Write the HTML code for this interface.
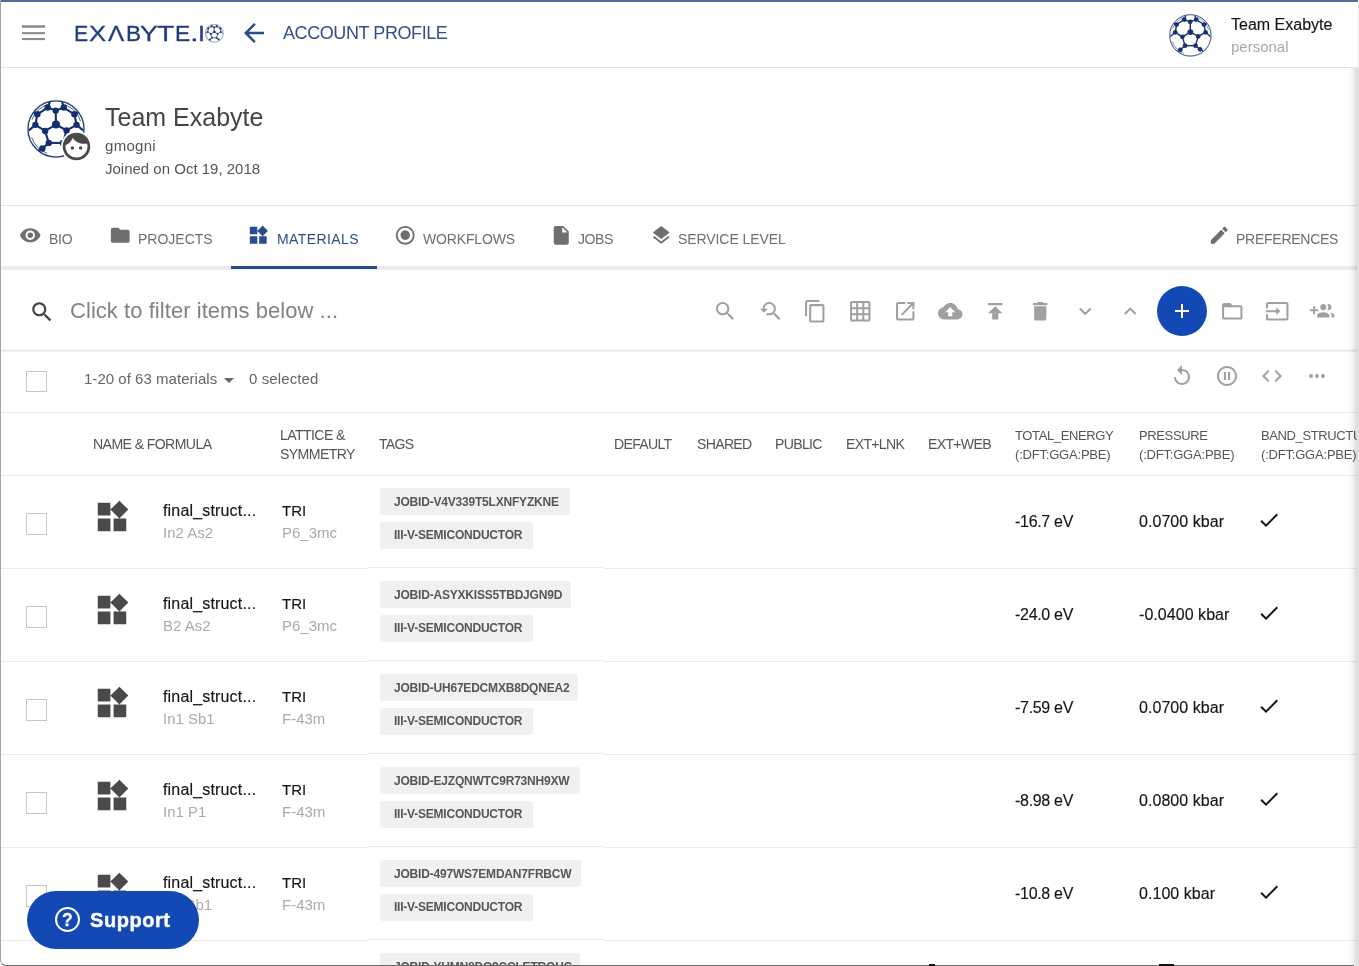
<!DOCTYPE html>
<html><head><meta charset="utf-8"><title>Account Profile</title>
<style>
html,body{margin:0;padding:0;background:#fff;}
body{width:1359px;height:966px;position:relative;overflow:hidden;font-family:"Liberation Sans",sans-serif;}
.t{position:absolute;white-space:nowrap;will-change:transform;}
.ic{position:absolute;display:block;overflow:visible;}
.bar{position:absolute;}
.cb{position:absolute;width:19px;height:20px;border:1px solid #c6c6c6;background:#fff;}
.chip{position:absolute;height:27px;line-height:27.5px;padding:0 0 0 14px;background:#f0f0f0;border-radius:3px;font-size:12px;letter-spacing:-0.2px;font-weight:700;color:#565656;white-space:nowrap;will-change:transform;}
</style></head><body>
<div class="bar" style="left:0;top:0;width:1358px;height:2px;background:linear-gradient(#57719c,#4a6592)"></div>
<svg class="ic" style="left:0;top:0;width:60px;height:60px" viewBox="0 0 60 60"><g fill="#8c8c8c"><rect x="22" y="25.2" width="23" height="2.6"/><rect x="22" y="32.1" width="23" height="2.1"/><rect x="22" y="38" width="23" height="2.1"/></g></svg>
<div class="t" style="left:74.4px;top:22.08px;font-size:22.7px;line-height:22.7px;color:#1f3d7d;font-weight:400;letter-spacing:0px;transform:scaleX(0.938);transform-origin:0 0;-webkit-text-stroke:0.3px #1f3d7d;">E</div>
<div class="t" style="left:88.76px;top:22.08px;font-size:22.7px;line-height:22.7px;color:#1f3d7d;font-weight:400;letter-spacing:0px;transform:scaleX(1.130);transform-origin:0 0;-webkit-text-stroke:0.3px #1f3d7d;">X</div>
<div class="t" style="left:107.58px;top:22.08px;font-size:22.7px;line-height:22.7px;color:#1f3d7d;font-weight:400;letter-spacing:0px;transform:scaleX(1.069);transform-origin:0 0;-webkit-text-stroke:0.3px #1f3d7d;">&#923;</div>
<div class="t" style="left:125.94px;top:22.08px;font-size:22.7px;line-height:22.7px;color:#1f3d7d;font-weight:400;letter-spacing:0px;transform:scaleX(0.972);transform-origin:0 0;-webkit-text-stroke:0.3px #1f3d7d;">B</div>
<div class="t" style="left:139.93px;top:22.08px;font-size:22.7px;line-height:22.7px;color:#1f3d7d;font-weight:400;letter-spacing:0px;transform:scaleX(1.172);transform-origin:0 0;-webkit-text-stroke:0.3px #1f3d7d;">Y</div>
<div class="t" style="left:157.0px;top:22.08px;font-size:22.7px;line-height:22.7px;color:#1f3d7d;font-weight:400;letter-spacing:0px;transform:scaleX(1.240);transform-origin:0 0;-webkit-text-stroke:0.3px #1f3d7d;">T</div>
<div class="t" style="left:174.68px;top:22.08px;font-size:22.7px;line-height:22.7px;color:#1f3d7d;font-weight:400;letter-spacing:0px;transform:scaleX(1.002);transform-origin:0 0;-webkit-text-stroke:0.3px #1f3d7d;">E</div>
<div class="t" style="left:189.56px;top:22.08px;font-size:22.7px;line-height:22.7px;color:#1f3d7d;font-weight:400;letter-spacing:0px;transform:scaleX(1.391);transform-origin:0 0;-webkit-text-stroke:0.3px #1f3d7d;">.</div>
<div class="t" style="left:197.53px;top:22.08px;font-size:22.7px;line-height:22.7px;color:#1f3d7d;font-weight:400;letter-spacing:0px;transform:scaleX(1.113);transform-origin:0 0;-webkit-text-stroke:0.3px #1f3d7d;">I</div>
<svg class="ic" style="left:205.2px;top:23.999999999999996px;width:18.6px;height:18.6px" viewBox="0 0 100 100"><circle cx="50" cy="50" r="49" fill="#fff"/><g stroke="#1f3d7d" stroke-width="3.8" fill="none"><line x1="49.5" y1="18.3" x2="35.6" y2="13.0"/><line x1="49.5" y1="18.3" x2="63.4" y2="13.0"/><line x1="49.5" y1="18.3" x2="50.0" y2="42.3"/><line x1="35.6" y1="13.0" x2="17.8" y2="24.6"/><line x1="63.4" y1="13.0" x2="81.7" y2="24.6"/><line x1="17.8" y1="24.6" x2="14.5" y2="42.8"/><line x1="81.7" y1="24.6" x2="85.5" y2="42.8"/><line x1="14.5" y1="42.8" x2="31.3" y2="53.4"/><line x1="85.5" y1="42.8" x2="68.2" y2="52.4"/><line x1="50.0" y1="42.3" x2="31.3" y2="53.4"/><line x1="50.0" y1="42.3" x2="68.2" y2="52.4"/><line x1="31.3" y1="53.4" x2="37.5" y2="74.0"/><line x1="68.2" y1="52.4" x2="62.0" y2="74.0"/><line x1="37.5" y1="74.0" x2="62.0" y2="74.0"/><line x1="37.5" y1="74.0" x2="26.5" y2="83.6"/><line x1="62.0" y1="74.0" x2="72.6" y2="82.6"/><line x1="35.6" y1="13.0" x2="39.4" y2="3.4"/><line x1="63.4" y1="13.0" x2="60.6" y2="3.4"/><line x1="17.8" y1="24.6" x2="11.6" y2="22.2"/><line x1="81.7" y1="24.6" x2="88.4" y2="22.2"/><line x1="14.5" y1="42.8" x2="3.4" y2="52.4"/><line x1="85.5" y1="42.8" x2="96.6" y2="52.4"/><line x1="26.5" y1="83.6" x2="20.2" y2="87.0"/><line x1="72.6" y1="82.6" x2="79.8" y2="87.0"/></g><g fill="#1f3d7d"><circle cx="35.6" cy="13.0" r="5.8"/><circle cx="63.4" cy="13.0" r="5.8"/><circle cx="49.5" cy="18.3" r="5.8"/><circle cx="17.8" cy="24.6" r="5.8"/><circle cx="81.7" cy="24.6" r="5.8"/><circle cx="50.0" cy="42.3" r="7.2"/><circle cx="14.5" cy="42.8" r="5.8"/><circle cx="85.5" cy="42.8" r="5.8"/><circle cx="31.3" cy="53.4" r="5.8"/><circle cx="68.2" cy="52.4" r="5.8"/><circle cx="37.5" cy="74.0" r="5.8"/><circle cx="62.0" cy="74.0" r="5.8"/><circle cx="26.5" cy="83.6" r="5.8"/><circle cx="72.6" cy="82.6" r="5.8"/></g><circle cx="50" cy="50" r="48.3" fill="none" stroke="#1f3d7d" stroke-width="2.3"/><circle cx="50" cy="50" r="44.5" fill="none" stroke="#1f3d7d" stroke-opacity="0.8" stroke-width="1.7" stroke-dasharray="0 85.5 38.8 31 38.8 31 38.8 15.6"/><circle cx="50" cy="50" r="49.5" fill="none" stroke="#999" stroke-opacity="0.5" stroke-width="1"/></svg>
<svg class="ic" style="left:239px;top:17.5px;width:30px;height:30px;" viewBox="0 0 24 24"><path fill="#2b4c8c" d="M20 11H7.83l5.59-5.59L12 4l-8 8 8 8 1.41-1.41L7.83 13H20v-2z"/></svg>
<div class="t" style="left:283px;top:23.56px;font-size:18px;line-height:18px;color:#30508c;font-weight:400;letter-spacing:-0.42px;">ACCOUNT PROFILE</div>
<svg class="ic" style="left:1168.6px;top:13.600000000000001px;width:42.8px;height:42.8px" viewBox="0 0 100 100"><circle cx="50" cy="50" r="49" fill="#fff"/><g stroke="#143271" stroke-width="3.3" fill="none"><line x1="49.5" y1="18.3" x2="35.6" y2="13.0"/><line x1="49.5" y1="18.3" x2="63.4" y2="13.0"/><line x1="49.5" y1="18.3" x2="50.0" y2="42.3"/><line x1="35.6" y1="13.0" x2="17.8" y2="24.6"/><line x1="63.4" y1="13.0" x2="81.7" y2="24.6"/><line x1="17.8" y1="24.6" x2="14.5" y2="42.8"/><line x1="81.7" y1="24.6" x2="85.5" y2="42.8"/><line x1="14.5" y1="42.8" x2="31.3" y2="53.4"/><line x1="85.5" y1="42.8" x2="68.2" y2="52.4"/><line x1="50.0" y1="42.3" x2="31.3" y2="53.4"/><line x1="50.0" y1="42.3" x2="68.2" y2="52.4"/><line x1="31.3" y1="53.4" x2="37.5" y2="74.0"/><line x1="68.2" y1="52.4" x2="62.0" y2="74.0"/><line x1="37.5" y1="74.0" x2="62.0" y2="74.0"/><line x1="37.5" y1="74.0" x2="26.5" y2="83.6"/><line x1="62.0" y1="74.0" x2="72.6" y2="82.6"/><line x1="35.6" y1="13.0" x2="39.4" y2="3.4"/><line x1="63.4" y1="13.0" x2="60.6" y2="3.4"/><line x1="17.8" y1="24.6" x2="11.6" y2="22.2"/><line x1="81.7" y1="24.6" x2="88.4" y2="22.2"/><line x1="14.5" y1="42.8" x2="3.4" y2="52.4"/><line x1="85.5" y1="42.8" x2="96.6" y2="52.4"/><line x1="26.5" y1="83.6" x2="20.2" y2="87.0"/><line x1="72.6" y1="82.6" x2="79.8" y2="87.0"/></g><g fill="#143271"><circle cx="35.6" cy="13.0" r="5.5"/><circle cx="63.4" cy="13.0" r="5.5"/><circle cx="49.5" cy="18.3" r="5.5"/><circle cx="17.8" cy="24.6" r="5.5"/><circle cx="81.7" cy="24.6" r="5.5"/><circle cx="50.0" cy="42.3" r="6.9"/><circle cx="14.5" cy="42.8" r="5.5"/><circle cx="85.5" cy="42.8" r="5.5"/><circle cx="31.3" cy="53.4" r="5.5"/><circle cx="68.2" cy="52.4" r="5.5"/><circle cx="37.5" cy="74.0" r="5.5"/><circle cx="62.0" cy="74.0" r="5.5"/><circle cx="26.5" cy="83.6" r="5.5"/><circle cx="72.6" cy="82.6" r="5.5"/></g><circle cx="50" cy="50" r="48.3" fill="none" stroke="#143271" stroke-width="2.0"/><circle cx="50" cy="50" r="44.5" fill="none" stroke="#143271" stroke-opacity="0.8" stroke-width="1.5" stroke-dasharray="0 85.5 38.8 31 38.8 31 38.8 15.6"/><circle cx="50" cy="50" r="49.5" fill="none" stroke="#999" stroke-opacity="0.5" stroke-width="1"/></svg>
<div class="t" style="left:1231px;top:17.36px;font-size:16px;line-height:16px;color:#151515;font-weight:400;letter-spacing:0px;-webkit-text-stroke:0.15px #151515;">Team Exabyte</div>
<div class="t" style="left:1231px;top:38.90px;font-size:15px;line-height:15px;color:#a8a8a8;font-weight:400;letter-spacing:0px;">personal</div>
<div class="bar" style="left:0;top:67px;width:1359px;height:1px;background:#dfe3ec"></div>
<svg class="ic" style="left:27px;top:99.5px;width:58px;height:58px" viewBox="0 0 100 100"><circle cx="50" cy="50" r="49" fill="#fff"/><g stroke="#112f6e" stroke-width="3.6" fill="none"><line x1="49.5" y1="18.3" x2="35.6" y2="13.0"/><line x1="49.5" y1="18.3" x2="63.4" y2="13.0"/><line x1="49.5" y1="18.3" x2="50.0" y2="42.3"/><line x1="35.6" y1="13.0" x2="17.8" y2="24.6"/><line x1="63.4" y1="13.0" x2="81.7" y2="24.6"/><line x1="17.8" y1="24.6" x2="14.5" y2="42.8"/><line x1="81.7" y1="24.6" x2="85.5" y2="42.8"/><line x1="14.5" y1="42.8" x2="31.3" y2="53.4"/><line x1="85.5" y1="42.8" x2="68.2" y2="52.4"/><line x1="50.0" y1="42.3" x2="31.3" y2="53.4"/><line x1="50.0" y1="42.3" x2="68.2" y2="52.4"/><line x1="31.3" y1="53.4" x2="37.5" y2="74.0"/><line x1="68.2" y1="52.4" x2="62.0" y2="74.0"/><line x1="37.5" y1="74.0" x2="62.0" y2="74.0"/><line x1="37.5" y1="74.0" x2="26.5" y2="83.6"/><line x1="62.0" y1="74.0" x2="72.6" y2="82.6"/><line x1="35.6" y1="13.0" x2="39.4" y2="3.4"/><line x1="63.4" y1="13.0" x2="60.6" y2="3.4"/><line x1="17.8" y1="24.6" x2="11.6" y2="22.2"/><line x1="81.7" y1="24.6" x2="88.4" y2="22.2"/><line x1="14.5" y1="42.8" x2="3.4" y2="52.4"/><line x1="85.5" y1="42.8" x2="96.6" y2="52.4"/><line x1="26.5" y1="83.6" x2="20.2" y2="87.0"/><line x1="72.6" y1="82.6" x2="79.8" y2="87.0"/></g><g fill="#112f6e"><circle cx="35.6" cy="13.0" r="5.5"/><circle cx="63.4" cy="13.0" r="5.5"/><circle cx="49.5" cy="18.3" r="5.5"/><circle cx="17.8" cy="24.6" r="5.5"/><circle cx="81.7" cy="24.6" r="5.5"/><circle cx="50.0" cy="42.3" r="6.9"/><circle cx="14.5" cy="42.8" r="5.5"/><circle cx="85.5" cy="42.8" r="5.5"/><circle cx="31.3" cy="53.4" r="5.5"/><circle cx="68.2" cy="52.4" r="5.5"/><circle cx="37.5" cy="74.0" r="5.5"/><circle cx="62.0" cy="74.0" r="5.5"/><circle cx="26.5" cy="83.6" r="5.5"/><circle cx="72.6" cy="82.6" r="5.5"/></g><circle cx="50" cy="50" r="48.3" fill="none" stroke="#112f6e" stroke-width="2.2"/><circle cx="50" cy="50" r="44.5" fill="none" stroke="#112f6e" stroke-opacity="0.8" stroke-width="1.6" stroke-dasharray="0 85.5 38.8 31 38.8 31 38.8 15.6"/><circle cx="50" cy="50" r="49.5" fill="none" stroke="#999" stroke-opacity="0.5" stroke-width="1"/></svg>
<div class="bar" style="left:61px;top:131px;width:31px;height:31px;border-radius:50%;background:#fff"></div>
<svg class="ic" style="left:60px;top:130px;width:33px;height:33px;" viewBox="0 0 24 24"><path fill="#4a4a4a" d="M9 11.75c-.69 0-1.25.56-1.25 1.25s.56 1.25 1.25 1.25 1.25-.56 1.25-1.25-.56-1.25-1.25-1.25zm6 0c-.69 0-1.25.56-1.25 1.25s.56 1.25 1.25 1.25 1.25-.56 1.25-1.25-.56-1.25-1.25-1.25zM12 2C6.48 2 2 6.48 2 12s4.48 10 10 10 10-4.48 10-10S17.52 2 12 2zm0 18c-4.41 0-8-3.59-8-8 0-.29.02-.58.05-.86 2.36-1.05 4.23-2.98 5.21-5.37C11.07 8.33 14.05 10 17.420 10c.78 0 1.53-.09 2.25-.26.21.71.33 1.47.33 2.26 0 4.41-3.59 8-8 8z"/></svg>
<div class="t" style="left:105px;top:104.94px;font-size:25px;line-height:25px;color:#454545;font-weight:400;letter-spacing:0px;">Team Exabyte</div>
<div class="t" style="left:105px;top:137.50px;font-size:15px;line-height:15px;color:#555;font-weight:400;letter-spacing:0.3px;">gmogni</div>
<div class="t" style="left:105px;top:161.10px;font-size:15px;line-height:15px;color:#555;font-weight:400;letter-spacing:0px;">Joined on Oct 19, 2018</div>
<div class="bar" style="left:0;top:205px;width:1359px;height:1px;background:#dfe3ec"></div>
<svg class="ic" style="left:19px;top:224px;width:22.5px;height:22.5px;" viewBox="0 0 24 24"><path fill="#6e6e6e" d="M12 4.5C7 4.5 2.73 7.61 1 12c1.73 4.39 6 7.5 11 7.5s9.27-3.11 11-7.5c-1.73-4.39-6-7.5-11-7.5zM12 17c-2.76 0-5-2.24-5-5s2.24-5 5-5 5 2.24 5 5-2.24 5-5 5zm0-8c-1.66 0-3 1.34-3 3s1.34 3 3 3 3-1.34 3-3-1.34-3-3-3z"/></svg>
<div class="t" style="left:49px;top:231.95px;font-size:14px;line-height:14px;color:#6e6e6e;font-weight:400;letter-spacing:-0.3px;">BIO</div>
<svg class="ic" style="left:109px;top:224px;width:22.5px;height:22.5px;" viewBox="0 0 24 24"><path fill="#6e6e6e" d="M10 4H4c-1.1 0-1.99.9-1.99 2L2 18c0 1.1.9 2 2 2h16c1.1 0 2-.9 2-2V8c0-1.1-.9-2-2-2h-8l-2-2z"/></svg>
<div class="t" style="left:138px;top:231.95px;font-size:14px;line-height:14px;color:#6e6e6e;font-weight:400;letter-spacing:0px;">PROJECTS</div>
<svg class="ic" style="left:247px;top:224px;width:22.5px;height:22.5px;" viewBox="0 0 24 24"><path fill="#2b4c8c" d="M13 13v8h8v-8h-8zM3 21h8v-8H3v8zM3 3v8h8V3H3zm13.66-1.310L11 7.34 16.66 13l5.66-5.66-5.66-5.65z"/></svg>
<div class="t" style="left:276.5px;top:231.95px;font-size:14px;line-height:14px;color:#2b4c8c;font-weight:400;letter-spacing:0.4px;">MATERIALS</div>
<svg class="ic" style="left:394px;top:224px;width:22.5px;height:22.5px;" viewBox="0 0 24 24"><path fill="#6e6e6e" d="M12 7c-2.76 0-5 2.24-5 5s2.24 5 5 5 5-2.240 5-5-2.24-5-5-5zm0-5C6.48 2 2 6.48 2 12s4.48 10 10 10 10-4.48 10-10S17.52 2 12 2zm0 18c-4.42 0-8-3.58-8-8s3.58-8 8-8 8 3.58 8 8-3.58 8-8 8z"/></svg>
<div class="t" style="left:423.4px;top:231.95px;font-size:14px;line-height:14px;color:#6e6e6e;font-weight:400;letter-spacing:-0.15px;">WORKFLOWS</div>
<svg class="ic" style="left:550px;top:224px;width:22.5px;height:22.5px;" viewBox="0 0 24 24"><path fill="#6e6e6e" d="M6 2c-1.1 0-1.99.9-1.99 2L4 20c0 1.1.89 2 1.99 2H18c1.1 0 2-.9 2-2V8l-6-6H6zm7 7V3.5L18.5 9H13z"/></svg>
<div class="t" style="left:578.4px;top:231.95px;font-size:14px;line-height:14px;color:#6e6e6e;font-weight:400;letter-spacing:-0.4px;">JOBS</div>
<svg class="ic" style="left:650px;top:224px;width:22.5px;height:22.5px;" viewBox="0 0 24 24"><path fill="#6e6e6e" d="M11.99 18.54l-7.37-5.73L3 14.07l9 7 9-7-1.63-1.27-7.38 5.74zM12 16l7.36-5.73L21 9l-9-7-9 7 1.63 1.27L12 16z"/></svg>
<div class="t" style="left:677.9px;top:231.95px;font-size:14px;line-height:14px;color:#6e6e6e;font-weight:400;letter-spacing:-0.08px;">SERVICE LEVEL</div>
<svg class="ic" style="left:1208px;top:224px;width:22.5px;height:22.5px;" viewBox="0 0 24 24"><path fill="#6e6e6e" d="M3 17.25V21h3.75L17.81 9.94l-3.75-3.75L3 17.25zM20.71 7.04c.39-.39.39-1.02 0-1.41l-2.34-2.34c-.39-.39-1.02-.39-1.41 0l-1.83 1.83 3.75 3.75 1.83-1.83z"/></svg>
<div class="t" style="left:1236.4px;top:231.95px;font-size:14px;line-height:14px;color:#6e6e6e;font-weight:400;letter-spacing:-0.26px;">PREFERENCES</div>
<div class="bar" style="left:0;top:266px;width:1359px;height:4px;background:linear-gradient(#ececec,#e9e9e9 75%,#f6f6f6)"></div>
<div class="bar" style="left:231px;top:266px;width:146px;height:3px;background:#2b4c8c"></div>
<svg class="ic" style="left:28.5px;top:299px;width:26px;height:26px;" viewBox="0 0 24 24"><path fill="#444" d="M15.5 14h-.79l-.28-.27C15.41 12.59 16 11.11 16 9.5 16 5.91 13.09 3 9.5 3S3 5.91 3 9.5 5.91 16 9.5 16c1.61 0 3.09-.59 4.23-1.57l.27.28v.79l5 4.99L20.49 19l-4.99-5zm-6 0C7.01 14 5 11.99 5 9.5S7.01 5 9.5 5 14 7.01 14 9.5 11.99 14 9.5 14z"/></svg>
<div class="t" style="left:69.6px;top:299.63px;font-size:22px;line-height:22px;color:#828282;font-weight:400;letter-spacing:0.05px;">Click to filter items below ...</div>
<svg class="ic" style="left:712.8px;top:298.5px;width:24.5px;height:24.5px;" viewBox="0 0 24 24"><path fill="#a0a0a0" d="M15.5 14h-.79l-.28-.27C15.41 12.59 16 11.11 16 9.5 16 5.91 13.09 3 9.5 3S3 5.91 3 9.5 5.91 16 9.5 16c1.61 0 3.09-.59 4.23-1.57l.27.28v.79l5 4.99L20.49 19l-4.99-5zm-6 0C7.01 14 5 11.99 5 9.5S7.01 5 9.5 5 14 7.01 14 9.5 11.99 14 9.5 14z"/></svg>
<svg class="ic" style="left:757.8px;top:298.5px;width:24.5px;height:24.5px;" viewBox="0 0 24 24"><path fill="#a0a0a0" d="M17.01 14h-.8l-.27-.27c.98-1.14 1.57-2.610 1.57-4.23 0-3.59-2.91-6.5-6.5-6.5s-6.5 3-6.5 6.5H2l3.84 4 4.16-4H6.51C6.51 7 8.53 5 11.01 5s4.5 2.01 4.5 4.5c0 2.48-2.02 4.5-4.5 4.5-.65 0-1.26-.14-1.82-.38L7.71 15.1c.97.57 2.09.9 3.3.9 1.61 0 3.08-.59 4.22-1.57l.27.27v.79l5.01 4.99L22 19l-4.99-5z"/></svg>
<svg class="ic" style="left:802.8px;top:298.5px;width:24.5px;height:24.5px;" viewBox="0 0 24 24"><path fill="#a0a0a0" d="M16 1H4c-1.1 0-2 .9-2 2v14h2V3h12V1zm3 4H8c-1.1 0-2 .9-2 2v14c0 1.1.9 2 2 2h11c1.1 0 2-.9 2-2V7c0-1.1-.9-2-2-2zm0 16H8V7h11v14z"/></svg>
<svg class="ic" style="left:847.8px;top:298.5px;width:24.5px;height:24.5px;" viewBox="0 0 24 24"><path fill="#a0a0a0" d="M20 2H4c-1.1 0-2 .9-2 2v16c0 1.1.9 2 2 2h16c1.1 0 2-.9 2-2V4c0-1.1-.9-2-2-2zM8 20H4v-4h4v4zm0-6H4v-4h4v4zm0-6H4V4h4v4zm6 12h-4v-4h4v4zm0-6h-4v-4h4v4zm0-6h-4V4h4v4zm6 12h-4v-4h4v4zm0-6h-4v-4h4v4zm0-6h-4V4h4v4z"/></svg>
<svg class="ic" style="left:892.8px;top:298.5px;width:24.5px;height:24.5px;" viewBox="0 0 24 24"><path fill="#a0a0a0" d="M19 19H5V5h7V3H5c-1.11 0-2 .9-2 2v14c0 1.1.89 2 2 2h14c1.1 0 2-.9 2-2v-7h-2v7zM14 3v2h3.59l-9.83 9.83 1.41 1.41L19 6.41V10h2V3h-7z"/></svg>
<svg class="ic" style="left:937.8px;top:298.5px;width:24.5px;height:24.5px;" viewBox="0 0 24 24"><path fill="#a0a0a0" d="M19.35 10.04C18.67 6.59 15.64 4 12 4 9.11 4 6.6 5.64 5.35 8.04 2.34 8.36 0 10.91 0 14c0 3.31 2.69 6 6 6h13c2.76 0 5-2.24 5-5 0-2.64-2.05-4.78-4.65-4.96zM14 13v4h-4v-4H7l5-5 5 5h-3z"/></svg>
<svg class="ic" style="left:982.8px;top:298.5px;width:24.5px;height:24.5px;" viewBox="0 0 24 24"><path fill="#a0a0a0" d="M5 4v2h14V4H5zm0 10h4v6h6v-6h4l-7-7-7 7z"/></svg>
<svg class="ic" style="left:1027.8px;top:298.5px;width:24.5px;height:24.5px;" viewBox="0 0 24 24"><path fill="#a0a0a0" d="M6 19c0 1.1.9 2 2 2h8c1.1 0 2-.9 2-2V7H6v12zM19 4h-3.5l-1-1h-5l-1 1H5v2h14V4z"/></svg>
<svg class="ic" style="left:1072.8px;top:298.5px;width:24.5px;height:24.5px;" viewBox="0 0 24 24"><path fill="#a0a0a0" d="M16.59 8.59L12 13.17 7.41 8.59 6 10l6 6 6-6z"/></svg>
<svg class="ic" style="left:1117.8px;top:298.5px;width:24.5px;height:24.5px;" viewBox="0 0 24 24"><path fill="#a0a0a0" d="M12 8l-6 6 1.41 1.41L12 10.83l4.59 4.58L18 14z"/></svg>
<svg class="ic" style="left:1219.8px;top:298.5px;width:24.5px;height:24.5px;" viewBox="0 0 24 24"><path fill="#a0a0a0" d="M20 6h-8l-2-2H4c-1.1 0-1.99.9-1.99 2L2 18c0 1.1.9 2 2 2h16c1.1 0 2-.9 2-2V8c0-1.1-.9-2-2-2zm0 12H4V8h16v10z"/></svg>
<svg class="ic" style="left:1264.8px;top:298.5px;width:24.5px;height:24.5px;" viewBox="0 0 24 24"><path fill="#a0a0a0" d="M21 3.01H3c-1.1 0-2 .9-2 2V9h2V4.99h18v14.03H3V15H1v4.01c0 1.1.9 1.98 2 1.98h18c1.1 0 2-.88 2-1.98v-14c0-1.11-.9-2-2-2zM11 16l4-4-4-4v3H1v2h10v3z"/></svg>
<svg class="ic" style="left:1309.8px;top:298.5px;width:24.5px;height:24.5px;" viewBox="0 0 24 24"><path fill="#a0a0a0" d="M8 10H5V7H3v3H0v2h3v3h2v-3h3v-2zm10 1c1.66 0 2.99-1.34 2.99-3S19.66 5 18 5c-.32 0-.63.05-.91.14.57.81.9 1.79.9 2.86s-.34 2.04-.9 2.86c.28.09.59.14.91.14zm-5 0c1.66 0 2.99-1.34 2.99-3S14.66 5 13 5c-1.66 0-3 1.34-3 3s1.34 3 3 3zm6.62 2.16c.83.73 1.38 1.66 1.38 2.84v2h3v-2c0-1.54-2.37-2.49-4.38-2.84zM13 13c-2 0-6 1-6 3v2h12v-2c0-2-4-3-6-3z"/></svg>
<div class="bar" style="left:1157px;top:286px;width:50px;height:50px;border-radius:50%;background:#1249b5"></div>
<svg class="ic" style="left:1170px;top:299px;width:24px;height:24px;" viewBox="0 0 24 24"><path fill="#fff" d="M19 13h-6v6h-2v-6H5v-2h6V5h2v6h6v2z"/></svg>
<div class="bar" style="left:0;top:349px;width:1359px;height:3px;background:linear-gradient(#f7f7f7,#ebebeb 50%,#f5f5f5)"></div>
<div class="cb" style="left:26px;top:371px;height:19px"></div>
<div class="t" style="left:84px;top:371.40px;font-size:15px;line-height:15px;color:#666;font-weight:400;letter-spacing:0.03px;">1-20 of 63 materials</div>
<svg class="ic" style="left:217px;top:368px;width:24px;height:24px;" viewBox="0 0 24 24"><path fill="#666" d="M7 10l5 5 5-5z"/></svg>
<div class="t" style="left:248.5px;top:371.40px;font-size:15px;line-height:15px;color:#666;font-weight:400;letter-spacing:0.1px;">0 selected</div>
<svg class="ic" style="left:1169.5px;top:364px;width:24px;height:24px;" viewBox="0 0 24 24"><path fill="#a0a0a0" d="M12 5V1L7 6l5 5V7c3.31 0 6 2.69 6 6s-2.69 6-6 6-6-2.69-6-6H4c0 4.42 3.58 8 8 8s8-3.58 8-8-3.58-8-8-8z"/></svg>
<svg class="ic" style="left:1214.5px;top:364px;width:24px;height:24px;" viewBox="0 0 24 24"><path fill="#a0a0a0" d="M9 16h2V8H9v8zm3-14C6.48 2 2 6.48 2 12s4.48 10 10 10 10-4.48 10-10S17.52 2 12 2zm0 18c-4.41 0-8-3.59-8-8s3.59-8 8-8 8 3.59 8 8-3.59 8-8 8zm1-4h2V8h-2v8z"/></svg>
<svg class="ic" style="left:1259.5px;top:364px;width:24px;height:24px;" viewBox="0 0 24 24"><path fill="#a0a0a0" d="M9.4 16.6L4.8 12l4.6-4.6L8 6l-6 6 6 6 1.4-1.4zm5.2 0l4.6-4.6-4.6-4.6L16 6l6 6-6 6-1.4-1.4z"/></svg>
<svg class="ic" style="left:1304.5px;top:364px;width:24px;height:24px;" viewBox="0 0 24 24"><path fill="#a0a0a0" d="M6 10c-1.1 0-2 .9-2 2s.9 2 2 2 2-.9 2-2-.9-2-2-2zm12 0c-1.1 0-2 .9-2 2s.9 2 2 2 2-.9 2-2-.9-2-2-2zm-6 0c-1.1 0-2 .9-2 2s.9 2 2 2 2-.9 2-2-.9-2-2-2z"/></svg>
<div class="bar" style="left:0;top:412px;width:1359px;height:1px;background:#ececec"></div>
<div class="t" style="left:92.8px;top:437.26px;font-size:14.1px;line-height:14.1px;color:#555;font-weight:400;letter-spacing:-0.6px;">NAME &amp; FORMULA</div>
<div class="t" style="left:280.3px;top:428.26px;font-size:14.1px;line-height:14.1px;color:#555;font-weight:400;letter-spacing:-0.6px;">LATTICE &amp;</div>
<div class="t" style="left:280.3px;top:447.46px;font-size:14.1px;line-height:14.1px;color:#555;font-weight:400;letter-spacing:-0.6px;">SYMMETRY</div>
<div class="t" style="left:379.3px;top:437.26px;font-size:14.1px;line-height:14.1px;color:#555;font-weight:400;letter-spacing:-0.7px;">TAGS</div>
<div class="t" style="left:614.3px;top:437.26px;font-size:14.1px;line-height:14.1px;color:#555;font-weight:400;letter-spacing:-0.7px;">DEFAULT</div>
<div class="t" style="left:696.7px;top:437.26px;font-size:14.1px;line-height:14.1px;color:#555;font-weight:400;letter-spacing:-0.7px;">SHARED</div>
<div class="t" style="left:774.5px;top:437.26px;font-size:14.1px;line-height:14.1px;color:#555;font-weight:400;letter-spacing:-0.7px;">PUBLIC</div>
<div class="t" style="left:845.5px;top:437.26px;font-size:14.1px;line-height:14.1px;color:#555;font-weight:400;letter-spacing:-0.7px;">EXT+LNK</div>
<div class="t" style="left:928.4px;top:437.26px;font-size:14.1px;line-height:14.1px;color:#555;font-weight:400;letter-spacing:-0.7px;">EXT+WEB</div>
<div class="t" style="left:1015.3px;top:429.00px;font-size:13px;line-height:13px;color:#555;font-weight:400;letter-spacing:-0.38px;">TOTAL_ENERGY</div>
<div class="t" style="left:1015.3px;top:448.00px;font-size:13px;line-height:13px;color:#555;font-weight:400;letter-spacing:-0.2px;">(:DFT:GGA:PBE)</div>
<div class="t" style="left:1139.3px;top:429.00px;font-size:13px;line-height:13px;color:#555;font-weight:400;letter-spacing:-0.38px;">PRESSURE</div>
<div class="t" style="left:1139.3px;top:448.00px;font-size:13px;line-height:13px;color:#555;font-weight:400;letter-spacing:-0.2px;">(:DFT:GGA:PBE)</div>
<div class="t" style="left:1260.7px;top:429.00px;font-size:13px;line-height:13px;color:#555;font-weight:400;letter-spacing:-0.38px;">BAND_STRUCTURE</div>
<div class="t" style="left:1260.7px;top:448.00px;font-size:13px;line-height:13px;color:#555;font-weight:400;letter-spacing:-0.2px;">(:DFT:GGA:PBE)</div>
<div class="bar" style="left:0;top:475px;width:1359px;height:1px;background:#ececec"></div>
<div class="cb" style="left:26px;top:513px"></div>
<svg class="ic" style="left:93px;top:497.6px;width:38px;height:38px;" viewBox="0 0 24 24"><path fill="#4a4a4a" d="M13 13v8h8v-8h-8zM3 21h8v-8H3v8zM3 3v8h8V3H3zm13.66-1.310L11 7.34 16.66 13l5.66-5.66-5.66-5.65z"/></svg>
<div class="t" style="left:163px;top:503.36px;font-size:16px;line-height:16px;color:#151515;font-weight:400;letter-spacing:0.17px;-webkit-text-stroke:0.15px #151515;">final_struct...</div>
<div class="t" style="left:163px;top:525.10px;font-size:15px;line-height:15px;color:#aaa;font-weight:400;letter-spacing:0px;">In2 As2</div>
<div class="t" style="left:281.6px;top:503.30px;font-size:15px;line-height:15px;color:#151515;font-weight:400;letter-spacing:0px;-webkit-text-stroke:0.15px #151515;">TRI</div>
<div class="t" style="left:281.6px;top:525.10px;font-size:15px;line-height:15px;color:#aaa;font-weight:400;letter-spacing:0px;">P6_3mc</div>
<div class="chip" style="left:380px;top:488px;width:176px;line-height:29.8px;height:27px">JOBID-V4V339T5LXNFYZKNE</div>
<div class="chip" style="left:380px;top:522px;width:139px;letter-spacing:-0.22px">III-V-SEMICONDUCTOR</div>
<div class="t" style="left:1015px;top:514.06px;font-size:16px;line-height:16px;color:#151515;font-weight:400;letter-spacing:-0.3px;-webkit-text-stroke:0.15px #151515;">-16.7 eV</div>
<div class="t" style="left:1139px;top:514.06px;font-size:16px;line-height:16px;color:#151515;font-weight:400;letter-spacing:0.05px;-webkit-text-stroke:0.15px #151515;">0.0700 kbar</div>
<svg class="ic" style="left:1257px;top:507.6px;width:24px;height:24px;" viewBox="0 0 24 24"><path fill="#151515" d="M9 16.17L4.83 12l-1.42 1.41L9 19 21 7l-1.41-1.41z"/></svg>
<div class="bar" style="left:0;top:568px;width:368px;height:1px;background:#ececec"></div>
<div class="bar" style="left:368px;top:567px;width:235px;height:1px;background:#ececec"></div>
<div class="bar" style="left:603px;top:568px;width:756px;height:1px;background:#ececec"></div>
<div class="cb" style="left:26px;top:606px"></div>
<svg class="ic" style="left:93px;top:590.6px;width:38px;height:38px;" viewBox="0 0 24 24"><path fill="#4a4a4a" d="M13 13v8h8v-8h-8zM3 21h8v-8H3v8zM3 3v8h8V3H3zm13.66-1.310L11 7.34 16.66 13l5.66-5.66-5.66-5.65z"/></svg>
<div class="t" style="left:163px;top:596.36px;font-size:16px;line-height:16px;color:#151515;font-weight:400;letter-spacing:0.17px;-webkit-text-stroke:0.15px #151515;">final_struct...</div>
<div class="t" style="left:163px;top:618.10px;font-size:15px;line-height:15px;color:#aaa;font-weight:400;letter-spacing:0px;">B2 As2</div>
<div class="t" style="left:281.6px;top:596.30px;font-size:15px;line-height:15px;color:#151515;font-weight:400;letter-spacing:0px;-webkit-text-stroke:0.15px #151515;">TRI</div>
<div class="t" style="left:281.6px;top:618.10px;font-size:15px;line-height:15px;color:#aaa;font-weight:400;letter-spacing:0px;">P6_3mc</div>
<div class="chip" style="left:380px;top:581px;width:177px;line-height:29.8px;height:27px">JOBID-ASYXKISS5TBDJGN9D</div>
<div class="chip" style="left:380px;top:615px;width:139px;letter-spacing:-0.22px">III-V-SEMICONDUCTOR</div>
<div class="t" style="left:1015px;top:607.06px;font-size:16px;line-height:16px;color:#151515;font-weight:400;letter-spacing:-0.3px;-webkit-text-stroke:0.15px #151515;">-24.0 eV</div>
<div class="t" style="left:1139px;top:607.06px;font-size:16px;line-height:16px;color:#151515;font-weight:400;letter-spacing:0.05px;-webkit-text-stroke:0.15px #151515;">-0.0400 kbar</div>
<svg class="ic" style="left:1257px;top:600.6px;width:24px;height:24px;" viewBox="0 0 24 24"><path fill="#151515" d="M9 16.17L4.83 12l-1.42 1.41L9 19 21 7l-1.41-1.41z"/></svg>
<div class="bar" style="left:0;top:661px;width:368px;height:1px;background:#ececec"></div>
<div class="bar" style="left:368px;top:660px;width:235px;height:1px;background:#ececec"></div>
<div class="bar" style="left:603px;top:661px;width:756px;height:1px;background:#ececec"></div>
<div class="cb" style="left:26px;top:699px"></div>
<svg class="ic" style="left:93px;top:683.6px;width:38px;height:38px;" viewBox="0 0 24 24"><path fill="#4a4a4a" d="M13 13v8h8v-8h-8zM3 21h8v-8H3v8zM3 3v8h8V3H3zm13.66-1.310L11 7.34 16.66 13l5.66-5.66-5.66-5.65z"/></svg>
<div class="t" style="left:163px;top:689.36px;font-size:16px;line-height:16px;color:#151515;font-weight:400;letter-spacing:0.17px;-webkit-text-stroke:0.15px #151515;">final_struct...</div>
<div class="t" style="left:163px;top:711.10px;font-size:15px;line-height:15px;color:#aaa;font-weight:400;letter-spacing:0px;">In1 Sb1</div>
<div class="t" style="left:281.6px;top:689.30px;font-size:15px;line-height:15px;color:#151515;font-weight:400;letter-spacing:0px;-webkit-text-stroke:0.15px #151515;">TRI</div>
<div class="t" style="left:281.6px;top:711.10px;font-size:15px;line-height:15px;color:#aaa;font-weight:400;letter-spacing:0px;">F-43m</div>
<div class="chip" style="left:380px;top:674px;width:183.6px;line-height:29.8px;height:27px">JOBID-UH67EDCMXB8DQNEA2</div>
<div class="chip" style="left:380px;top:708px;width:139px;letter-spacing:-0.22px">III-V-SEMICONDUCTOR</div>
<div class="t" style="left:1015px;top:700.06px;font-size:16px;line-height:16px;color:#151515;font-weight:400;letter-spacing:-0.3px;-webkit-text-stroke:0.15px #151515;">-7.59 eV</div>
<div class="t" style="left:1139px;top:700.06px;font-size:16px;line-height:16px;color:#151515;font-weight:400;letter-spacing:0.05px;-webkit-text-stroke:0.15px #151515;">0.0700 kbar</div>
<svg class="ic" style="left:1257px;top:693.6px;width:24px;height:24px;" viewBox="0 0 24 24"><path fill="#151515" d="M9 16.17L4.83 12l-1.42 1.41L9 19 21 7l-1.41-1.41z"/></svg>
<div class="bar" style="left:0;top:754px;width:368px;height:1px;background:#ececec"></div>
<div class="bar" style="left:368px;top:753px;width:235px;height:1px;background:#ececec"></div>
<div class="bar" style="left:603px;top:754px;width:756px;height:1px;background:#ececec"></div>
<div class="cb" style="left:26px;top:792px"></div>
<svg class="ic" style="left:93px;top:776.6px;width:38px;height:38px;" viewBox="0 0 24 24"><path fill="#4a4a4a" d="M13 13v8h8v-8h-8zM3 21h8v-8H3v8zM3 3v8h8V3H3zm13.66-1.310L11 7.34 16.66 13l5.66-5.66-5.66-5.65z"/></svg>
<div class="t" style="left:163px;top:782.36px;font-size:16px;line-height:16px;color:#151515;font-weight:400;letter-spacing:0.17px;-webkit-text-stroke:0.15px #151515;">final_struct...</div>
<div class="t" style="left:163px;top:804.10px;font-size:15px;line-height:15px;color:#aaa;font-weight:400;letter-spacing:0px;">In1 P1</div>
<div class="t" style="left:281.6px;top:782.30px;font-size:15px;line-height:15px;color:#151515;font-weight:400;letter-spacing:0px;-webkit-text-stroke:0.15px #151515;">TRI</div>
<div class="t" style="left:281.6px;top:804.10px;font-size:15px;line-height:15px;color:#aaa;font-weight:400;letter-spacing:0px;">F-43m</div>
<div class="chip" style="left:380px;top:767px;width:186px;line-height:29.8px;height:27px">JOBID-EJZQNWTC9R73NH9XW</div>
<div class="chip" style="left:380px;top:801px;width:139px;letter-spacing:-0.22px">III-V-SEMICONDUCTOR</div>
<div class="t" style="left:1015px;top:793.06px;font-size:16px;line-height:16px;color:#151515;font-weight:400;letter-spacing:-0.3px;-webkit-text-stroke:0.15px #151515;">-8.98 eV</div>
<div class="t" style="left:1139px;top:793.06px;font-size:16px;line-height:16px;color:#151515;font-weight:400;letter-spacing:0.05px;-webkit-text-stroke:0.15px #151515;">0.0800 kbar</div>
<svg class="ic" style="left:1257px;top:786.6px;width:24px;height:24px;" viewBox="0 0 24 24"><path fill="#151515" d="M9 16.17L4.83 12l-1.42 1.41L9 19 21 7l-1.41-1.41z"/></svg>
<div class="bar" style="left:0;top:847px;width:368px;height:1px;background:#ececec"></div>
<div class="bar" style="left:368px;top:846px;width:235px;height:1px;background:#ececec"></div>
<div class="bar" style="left:603px;top:847px;width:756px;height:1px;background:#ececec"></div>
<div class="cb" style="left:26px;top:885px"></div>
<svg class="ic" style="left:93px;top:869.6px;width:38px;height:38px;" viewBox="0 0 24 24"><path fill="#4a4a4a" d="M13 13v8h8v-8h-8zM3 21h8v-8H3v8zM3 3v8h8V3H3zm13.66-1.310L11 7.34 16.66 13l5.66-5.66-5.66-5.65z"/></svg>
<div class="t" style="left:163px;top:875.36px;font-size:16px;line-height:16px;color:#151515;font-weight:400;letter-spacing:0.17px;-webkit-text-stroke:0.15px #151515;">final_struct...</div>
<div class="t" style="left:163px;top:897.10px;font-size:15px;line-height:15px;color:#aaa;font-weight:400;letter-spacing:0px;">B1 Sb1</div>
<div class="t" style="left:281.6px;top:875.30px;font-size:15px;line-height:15px;color:#151515;font-weight:400;letter-spacing:0px;-webkit-text-stroke:0.15px #151515;">TRI</div>
<div class="t" style="left:281.6px;top:897.10px;font-size:15px;line-height:15px;color:#aaa;font-weight:400;letter-spacing:0px;">F-43m</div>
<div class="chip" style="left:380px;top:860px;width:186.7px;line-height:29.8px;height:27px">JOBID-497WS7EMDAN7FRBCW</div>
<div class="chip" style="left:380px;top:894px;width:139px;letter-spacing:-0.22px">III-V-SEMICONDUCTOR</div>
<div class="t" style="left:1015px;top:886.06px;font-size:16px;line-height:16px;color:#151515;font-weight:400;letter-spacing:-0.3px;-webkit-text-stroke:0.15px #151515;">-10.8 eV</div>
<div class="t" style="left:1139px;top:886.06px;font-size:16px;line-height:16px;color:#151515;font-weight:400;letter-spacing:0.05px;-webkit-text-stroke:0.15px #151515;">0.100 kbar</div>
<svg class="ic" style="left:1257px;top:879.6px;width:24px;height:24px;" viewBox="0 0 24 24"><path fill="#151515" d="M9 16.17L4.83 12l-1.42 1.41L9 19 21 7l-1.41-1.41z"/></svg>
<div class="bar" style="left:0;top:940px;width:368px;height:1px;background:#ececec"></div>
<div class="bar" style="left:368px;top:939px;width:235px;height:1px;background:#ececec"></div>
<div class="bar" style="left:603px;top:940px;width:756px;height:1px;background:#ececec"></div>
<div class="cb" style="left:26px;top:978px"></div>
<svg class="ic" style="left:93px;top:962.6px;width:38px;height:38px;" viewBox="0 0 24 24"><path fill="#4a4a4a" d="M13 13v8h8v-8h-8zM3 21h8v-8H3v8zM3 3v8h8V3H3zm13.66-1.310L11 7.34 16.66 13l5.66-5.66-5.66-5.65z"/></svg>
<div class="t" style="left:163px;top:968.36px;font-size:16px;line-height:16px;color:#151515;font-weight:400;letter-spacing:0.17px;-webkit-text-stroke:0.15px #151515;">final_struct...</div>
<div class="t" style="left:163px;top:990.10px;font-size:15px;line-height:15px;color:#aaa;font-weight:400;letter-spacing:0px;">Ga1 As1</div>
<div class="t" style="left:281.6px;top:968.30px;font-size:15px;line-height:15px;color:#151515;font-weight:400;letter-spacing:0px;-webkit-text-stroke:0.15px #151515;">TRI</div>
<div class="t" style="left:281.6px;top:990.10px;font-size:15px;line-height:15px;color:#aaa;font-weight:400;letter-spacing:0px;">F-43m</div>
<div class="chip" style="left:380px;top:953px;width:186px;line-height:29.8px;height:27px">JOBID-YUMN8DQ9CCLETRQHG</div>
<div class="chip" style="left:380px;top:987px;width:139px;letter-spacing:-0.22px">III-V-SEMICONDUCTOR</div>
<div class="t" style="left:1015px;top:979.06px;font-size:16px;line-height:16px;color:#151515;font-weight:400;letter-spacing:-0.3px;-webkit-text-stroke:0.15px #151515;">-9.12 eV</div>
<div class="t" style="left:1139px;top:979.06px;font-size:16px;line-height:16px;color:#151515;font-weight:400;letter-spacing:0.05px;-webkit-text-stroke:0.15px #151515;">0.0500 kbar</div>
<svg class="ic" style="left:1257px;top:972.6px;width:24px;height:24px;" viewBox="0 0 24 24"><path fill="#151515" d="M9 16.17L4.83 12l-1.42 1.41L9 19 21 7l-1.41-1.41z"/></svg>
<div class="bar" style="left:0;top:1033px;width:368px;height:1px;background:#ececec"></div>
<div class="bar" style="left:368px;top:1032px;width:235px;height:1px;background:#ececec"></div>
<div class="bar" style="left:603px;top:1033px;width:756px;height:1px;background:#ececec"></div>
<div class="bar" style="left:27px;top:891px;width:172px;height:58px;border-radius:29px;background:#1249b5"></div>
<div class="bar" style="left:55px;top:906.5px;width:25px;height:25px;border-radius:50%;border:2.6px solid #fff;box-sizing:border-box"></div>
<div class="t" style="left:62.3px;top:912.19px;font-size:17.5px;line-height:17.5px;color:#fff;font-weight:700;letter-spacing:0px;-webkit-text-stroke:0.3px #fff;">?</div>
<div class="t" style="left:90px;top:909.87px;font-size:20px;line-height:20px;color:#fff;font-weight:700;letter-spacing:0.55px;-webkit-text-stroke:0.45px #fff;">Support</div>
<div class="bar" style="left:1348px;top:68px;width:9px;height:898px;background:linear-gradient(to right,rgba(0,0,0,0),rgba(0,0,0,0.03) 40%,rgba(0,0,0,0.08) 70%,rgba(0,0,0,0.14))"></div>
<div class="bar" style="left:1358px;top:2px;width:1px;height:66px;background:#ececec"></div>
<div class="bar" style="left:1357px;top:68px;width:2px;height:898px;background:#e0e0e0"></div>
<div class="bar" style="left:0;top:-10px;width:1354px;height:976px;border:1px solid #a5a5a5;border-radius:0 0 0 6px;box-sizing:border-box;border-top:0;border-right:0;border-bottom-color:#6a6a6a"></div>
<div class="bar" style="left:929px;top:964px;width:6px;height:2px;background:#111"></div>
<div class="bar" style="left:1159px;top:964px;width:15px;height:2px;background:#111"></div>
</body></html>
